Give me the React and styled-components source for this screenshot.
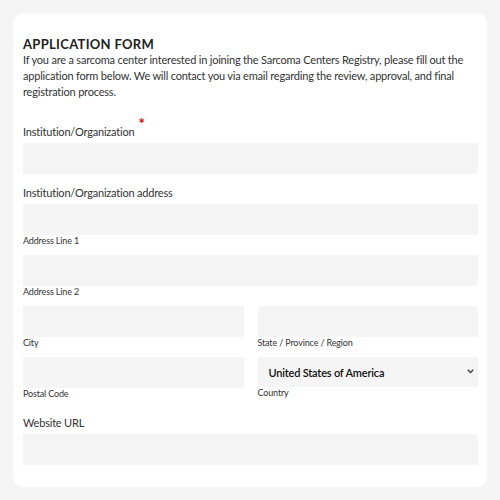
import React from 'react';
import styled, { createGlobalStyle } from 'styled-components';

const GlobalStyle = createGlobalStyle`
  html, body {
    margin: 0;
    padding: 0;
    background: #f5f5f5;
  }
  body {
    font-family: Lato, "Noto Sans", sans-serif;
    color: #333;
  }
  * {
    box-sizing: border-box;
  }
`;

const Page = styled.div`
  padding: 13px;
  min-height: 500px;
`;

const Card = styled.form`
  background: #fff;
  border-radius: 10px;
  padding: 23px 9px 22px 10px;
`;

const Heading = styled.h2`
  margin: 0;
  font-size: 13px;
  line-height: 16px;
  font-weight: 700;
  letter-spacing: 0.3px;
  color: #222;
`;

const Intro = styled.p`
  margin: 0 0 22px;
  font-size: 11px;
  line-height: 16px;
  letter-spacing: -0.2px;
  color: #333;
`;

const Group = styled.div`
  margin-bottom: ${(p) => p.$gap || 0}px;
`;

const Label = styled.label`
  display: block;
  font-size: 11px;
  line-height: 16px;
  letter-spacing: -0.2px;
  margin-bottom: 3px;
  color: #333;
`;

const Required = styled.span`
  color: #e00000;
  font-size: 15px;
  font-weight: 700;
  position: relative;
  top: -7px;
  margin-left: 4px;
`;

const Input = styled.input`
  display: block;
  width: 100%;
  height: 31px;
  border: none;
  background: #f5f5f5;
  padding: 0 12px;
  font: inherit;
  outline: none;
`;

const SubLabel = styled.span`
  display: block;
  font-size: 9px;
  line-height: 11px;
  letter-spacing: -0.15px;
  color: #333;
`;

const Field = styled.div`
  margin-bottom: ${(p) => p.$gap ?? 9}px;
`;

const Row = styled.div`
  display: grid;
  grid-template-columns: 1fr 1fr;
  column-gap: 14px;
`;

const SelectWrap = styled.div`
  position: relative;
`;

const Select = styled.select`
  display: block;
  width: 100%;
  height: 30px;
  border: none;
  background: #f5f5f5;
  appearance: none;
  padding: 0 10px 0 11px;
  font-family: Lato, "Noto Sans", sans-serif;
  font-size: 11px;
  letter-spacing: -0.2px;
  font-weight: 600;
  color: #111;
  outline: none;
`;

const Chevron = styled.svg`
  position: absolute;
  right: 4px;
  top: 12px;
  pointer-events: none;
`;

export default function App() {
  return (
    <>
      <GlobalStyle />
      <Page>
        <Card>
          <Heading>APPLICATION FORM</Heading>
          <Intro>
            If you are a sarcoma center interested in joining the Sarcoma Centers Registry, please fill out the
            application form below. We will contact you via email regarding the review, approval, and final
            registration process.
          </Intro>

          <Group $gap={11}>
            <Label>
              Institution/Organization<Required>*</Required>
            </Label>
            <Input />
          </Group>

          <Label>Institution/Organization address</Label>
          <Field>
            <Input />
            <SubLabel>Address Line 1</SubLabel>
          </Field>
          <Field>
            <Input />
            <SubLabel>Address Line 2</SubLabel>
          </Field>
          <Row>
            <Field>
              <Input />
              <SubLabel>City</SubLabel>
            </Field>
            <Field>
              <Input />
              <SubLabel>State / Province / Region</SubLabel>
            </Field>
            <Field $gap={16}>
              <Input />
              <SubLabel>Postal Code</SubLabel>
            </Field>
            <Field $gap={16}>
              <SelectWrap>
                <Select defaultValue="us">
                  <option value="us">United States of America</option>
                </Select>
                <Chevron width="7" height="5" viewBox="0 0 7 5">
                  <path d="M0.8 0.8 L3.5 3.6 L6.2 0.8" fill="none" stroke="#333" strokeWidth="1.3" />
                </Chevron>
              </SelectWrap>
              <SubLabel>Country</SubLabel>
            </Field>
          </Row>

          <Group>
            <Label>Website URL</Label>
            <Input />
          </Group>
        </Card>
      </Page>
    </>
  );
}
